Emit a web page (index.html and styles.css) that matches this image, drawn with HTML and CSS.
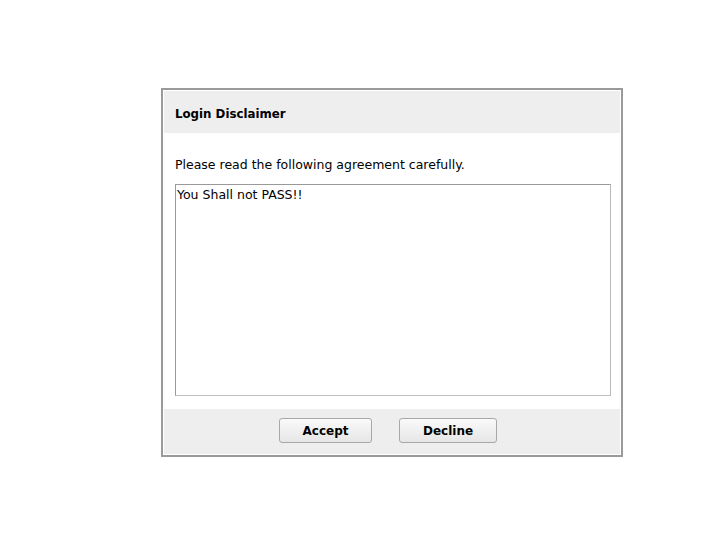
FILE: index.html
```html
<!DOCTYPE html>
<html>
<head>
<meta charset="utf-8">
<link rel="stylesheet" href="styles.css">
</head>
<body>
<div class="dialog">
  <div class="inner">
    <div class="header">Login Disclaimer</div>
    <div class="content">
      <p class="intro">Please read the following agreement carefully.</p>
      <div class="agreement">You Shall not PASS!!</div>
    </div>
    <div class="footer">
      <button class="btn btn-accept">Accept</button>
      <button class="btn btn-decline">Decline</button>
    </div>
  </div>
</div>
</body>
</html>
```
FILE: styles.css
```css
html, body {
  margin: 0;
  padding: 0;
  background: #fff;
}
body {
  font-family: "DejaVu Sans", Verdana, sans-serif;
  font-size: 12.5px;
  color: #000;
}
.dialog {
  margin-left: 161px;
  margin-top: 88px;
  width: 458px;
  height: 365px;
  border: 2px solid #9a9a9a;
  box-sizing: content-box;
}
.inner {
  margin: 1px;
  height: 363px;
  display: flex;
  flex-direction: column;
}
.header {
  background: #eeeeee;
  height: 42px;
  display: flex;
  align-items: center;
  padding-left: 11px;
  font-size: 11.8px;
  font-weight: bold;
  padding-top: 4px;
  box-sizing: border-box;
}
.content {
  flex: 1;
  padding: 0 9px 0 11px;
}
.intro {
  margin: 24px 0 11px 0;
  line-height: 16px;
}
.agreement {
  height: 206px;
  border: 1px solid #9a9a9a;
  border-bottom-color: #c0c0c0;
  border-right-color: #b8b8b8;
  padding: 2px 1px;
  line-height: 15px;
}
.footer {
  background: #eeeeee;
  height: 45px;
  display: flex;
  justify-content: center;
  align-items: center;
  gap: 27px;
  padding-right: 8px;
  padding-bottom: 2px;
  box-sizing: border-box;
}
.btn {
  font-family: "DejaVu Sans", Verdana, sans-serif;
  font-size: 12px;
  font-weight: bold;
  color: #000;
  height: 25px;
  border: 1px solid #a8a8a8;
  border-radius: 3px;
  background: linear-gradient(#fafafa, #e6e6e6);
  padding: 0;
}
.btn-accept { width: 93px; }
.btn-decline { width: 98px; }
```
